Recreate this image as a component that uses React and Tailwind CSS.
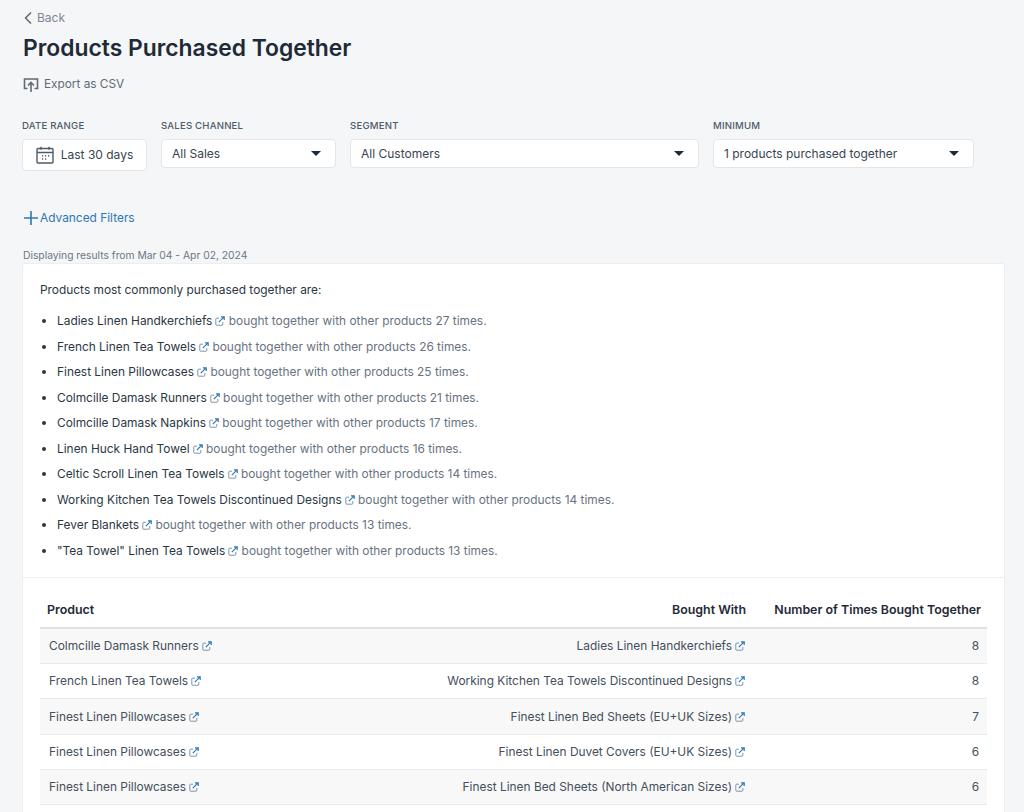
import { ChevronLeft } from 'lucide-react'

const common = [
  ['Ladies Linen Handkerchiefs', 27],
  ['French Linen Tea Towels', 26],
  ['Finest Linen Pillowcases', 25],
  ['Colmcille Damask Runners', 21],
  ['Colmcille Damask Napkins', 17],
  ['Linen Huck Hand Towel', 16],
  ['Celtic Scroll Linen Tea Towels', 14],
  ['Working Kitchen Tea Towels Discontinued Designs', 14],
  ['Fever Blankets', 13],
  ['"Tea Towel" Linen Tea Towels', 13],
]

const rows = [
  ['Colmcille Damask Runners', 'Ladies Linen Handkerchiefs', 8],
  ['French Linen Tea Towels', 'Working Kitchen Tea Towels Discontinued Designs', 8],
  ['Finest Linen Pillowcases', 'Finest Linen Bed Sheets (EU+UK Sizes)', 7],
  ['Finest Linen Pillowcases', 'Finest Linen Duvet Covers (EU+UK Sizes)', 6],
  ['Finest Linen Pillowcases', 'Finest Linen Bed Sheets (North American Sizes)', 6],
]

const LinkIcon = () => (
  <svg viewBox="0 0 10 10" fill="none" className="inline-block w-[10px] h-[10px] ml-[3px] align-[-1px]">
    <path d="M7.8 6v2.4a.8.8 0 0 1-.8.8H1.6a.8.8 0 0 1-.8-.8V3a.8.8 0 0 1 .8-.8H4" stroke="#7f94a8" strokeWidth="1" />
    <path d="M3.8 6.2 8.8 1.2M6 .8h3.2V4" stroke="#2b78b5" strokeWidth="1.2" />
  </svg>
)

const Caret = () => <span className="w-0 h-0 border-x-[5px] border-x-transparent border-t-[5px] border-t-[#1f2a37]" />

const Filter = ({ label, value, width }) => (
  <div className={width}>
    <div className="text-[9.6px] leading-[14px] font-medium tracking-[0.2px] text-[#4f5b67] mb-[6px]">{label}</div>
    <div className="h-[29px] flex items-center justify-between pl-[10px] pr-[14px] bg-white border border-[#e3e5e8] rounded-[4px] text-[12px] text-[#374451]">
      {value}
      <Caret />
    </div>
  </div>
)

export default function App() {
  return (
    <div className="h-[812px] overflow-hidden bg-[#f5f6f8] pl-[22px] pr-[19px] pt-[10px] text-[11.9px] text-[#2b3744] font-['Inter',sans-serif]">
      <div className="flex items-center h-[15px] text-[12px] text-[#7b8794]">
        <ChevronLeft className="w-[20px] h-[20px] -ml-[4px] -mr-[1px] text-[#5f6b77]" strokeWidth={2} />
        Back
      </div>
      <h1 className="mt-[6px] pl-[1px] text-[22.85px] leading-[34px] font-semibold text-[#1f2a37]">Products Purchased Together</h1>
      <div className="mt-[11px] flex items-center gap-[5px] h-[18px] pl-[1px] text-[11.8px] text-[#5f6b77]">
        <svg viewBox="0 0 16 16" fill="none" stroke="#5f6b77" strokeWidth="1.6" className="w-[16px] h-[16px]">
          <path d="M4.5 11.5H1.5v-9.5h13v9.5h-3" />
          <path d="M8 15V6M5 8.5 8 5.5l3 3" />
        </svg>
        Export as CSV
      </div>

      <div className="mt-[25px] flex gap-[14px] items-start">
        <div className="w-[125px]">
          <div className="text-[9.6px] leading-[14px] font-medium tracking-[0.2px] text-[#4f5b67] mb-[6px]">DATE RANGE</div>
          <div className="h-[32px] flex items-center justify-center gap-[7px] bg-white border border-[#e3e5e8] rounded-[4px] text-[12px] text-[#374451]">
            <svg viewBox="0 0 18 18" fill="none" stroke="#4f5b67" strokeWidth="1.4" className="w-[18px] h-[18px]">
              <rect x="1" y="2.5" width="16" height="14.5" rx="1" />
              <path d="M1 6.5h16M5 .8v3M13 .8v3" />
              <path d="M6 9.8h1.2M9 9.8h1.2M12 9.8h1.2M6 13h1.2M9 13h1.2" />
            </svg>
            Last 30 days
          </div>
        </div>
        <Filter label="SALES CHANNEL" value="All Sales" width="w-[175px]" />
        <Filter label="SEGMENT" value="All Customers" width="w-[349px]" />
        <Filter label="MINIMUM" value="1 products purchased together" width="w-[261px]" />
      </div>

      <div className="mt-[38px] flex items-center h-[18px] pl-[2px] text-[#2b78b5]">
        <svg viewBox="0 0 14 14" fill="none" stroke="#2b78b5" strokeWidth="1.6" className="w-[14px] h-[14px] mr-[2px]">
          <path d="M7 0v14M0 7h14" />
        </svg>
        Advanced Filters
      </div>

      <div className="mt-[21px] pl-[1px] text-[10.3px] leading-[14px] text-[#6b7683]">Displaying results from Mar 04 - Apr 02, 2024</div>

      <section className="mt-[1px] h-[315px] bg-white border border-[#eceef0] rounded-t-[2px] pl-[17px] pt-[17px]">
        <p className="leading-[18px]">Products most commonly purchased together are:</p>
        <ul className="mt-[13px] list-disc pl-[17px]">
          {common.map(([name, times]) => (
            <li key={name} className="h-[25.55px] leading-[18px]">
              {name}
              <LinkIcon /> <span className="text-[#68737f]">bought together with other products {times} times.</span>
            </li>
          ))}
        </ul>
      </section>

      <section className="bg-white border-x border-[#eceef0] px-[17px] pt-[24px] h-[300px]">
        <table className="w-full table-fixed border-collapse">
          <colgroup>
            <col className="w-[320px]" />
            <col />
            <col className="w-[235px]" />
          </colgroup>
          <thead>
            <tr className="border-b-2 border-[#dfe0e6] text-[12.4px] leading-[16px] text-[#1f2a37]">
              <th className="pb-[9px] pl-[7px] text-left font-semibold">Product</th>
              <th className="pb-[9px] pr-[6px] text-right font-semibold">Bought With</th>
              <th className="pb-[9px] pr-[6px] text-right font-semibold">Number of Times Bought Together</th>
            </tr>
          </thead>
          <tbody>
            {rows.map((r, i) => (
              <tr key={i} className={`h-[35.4px] border-b border-[#e8e9ec] text-[#444f5b] ${i % 2 === 0 ? 'bg-[#f8f8f8]' : 'bg-white'}`}>
                <td className="pl-[9px]">{r[0]}<LinkIcon /></td>
                <td className="pr-[7px] text-right">{r[1]}<LinkIcon /></td>
                <td className="pr-[8px] text-right">{r[2]}</td>
              </tr>
            ))}
          </tbody>
        </table>
      </section>
    </div>
  )
}
